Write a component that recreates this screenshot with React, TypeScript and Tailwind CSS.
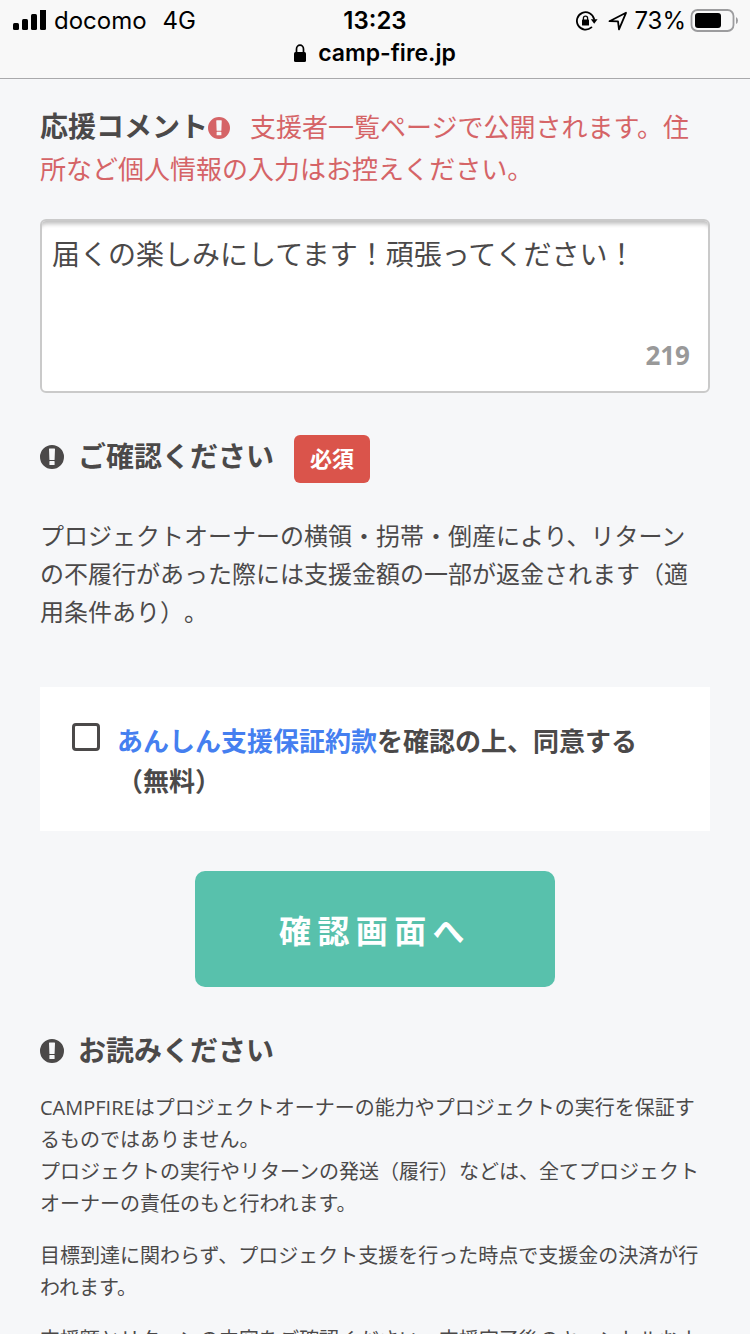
import React, { useState } from "react";

function NoticeIcon({ className }: { className: string }) {
  return (
    <svg viewBox="0 0 24 24" className={className} fill="currentColor" aria-hidden="true">
      <path
        fillRule="evenodd"
        d="M12 0a12 12 0 1 1 0 24a12 12 0 0 1 0-24zM9.6 3.5h4.8q.6 0 .6.6l-.4 10.3q0 .6-.6.6h-4q-.6 0-.6-.6l-.4-10.3q0-.6.6-.6zM9.9 16h4.2q.5 0 .5.5v3q0 .5-.5.5h-4.2q-.5 0-.5-.5v-3q0-.5.5-.5z"
      />
    </svg>
  );
}

function StatusBar() {
  return (
    <header className="shrink-0 border-b border-[#a9a9ab] bg-[#f8f8f8] pt-[5px] pb-[9px] font-['Inter','Liberation_Sans',sans-serif] text-black">
      <div className="grid grid-cols-3 items-center px-3 text-2xl leading-8">
        <div className="flex items-center gap-2">
          <svg viewBox="0 0 34 22" className="h-[22px] w-[34px]" aria-hidden="true">
            <rect x="1" y="13" width="6" height="7" rx="1.5" />
            <rect x="10" y="9" width="6" height="11" rx="1.5" />
            <rect x="19" y="4" width="6" height="16" rx="1.5" />
            <rect x="28" y="-1" width="6" height="21" rx="1.5" />
          </svg>
          <span>docomo</span>
          <span className="ml-2">4G</span>
        </div>
        <div className="text-center font-semibold">13:23</div>
        <div className="flex items-center justify-end">
          <svg viewBox="0 0 22 20" className="h-5 w-[22px]" aria-hidden="true">
            <path d="M15.4 16.4A8.7 8.7 0 1 1 18.1 8" fill="none" stroke="#000" strokeWidth="1.8" strokeLinecap="round" />
            <path d="M14.8 8.2h6.8l-3.4 4.6z" />
            <rect x="6" y="8.6" width="7" height="6" rx=".7" />
            <path d="M7.4 9.2V7.2a2.1 2.1 0 0 1 4.2 0v2" fill="none" stroke="#000" strokeWidth="1.3" />
          </svg>
          <svg viewBox="0 0 20 20" className="ml-2.5 h-5 w-5" aria-hidden="true">
            <path d="M1.5 10.2L18 1.8L11 18.4L10 10.4z" fill="none" stroke="#000" strokeWidth="1.8" strokeLinejoin="round" />
          </svg>
          <span className="ml-1.5">73%</span>
          <svg viewBox="0 0 48 24" className="ml-1 h-6 w-12 shrink-0" aria-hidden="true">
            <rect x="1.5" y="1" width="42" height="21" rx="6" fill="none" stroke="#9c9c9e" strokeWidth="1.8" />
            <rect x="5" y="4" width="26" height="15" rx="3" />
            <path d="M46 8q2 1 2 3.5t-2 3.5z" fill="#9c9c9e" />
          </svg>
        </div>
      </div>
      <div className="flex items-center justify-center gap-3 text-[23px] leading-8 font-semibold">
        <svg viewBox="0 0 12 18" className="h-[18px] w-3" aria-hidden="true">
          <rect x="0" y="8" width="12" height="10" rx="1.5" />
          <path d="M2.5 8.5V5a3.5 3.8 0 0 1 7 0v3.5" fill="none" stroke="#000" strokeWidth="1.7" />
        </svg>
        <span>camp-fire.jp</span>
      </div>
    </header>
  );
}

function SectionHeading({ title, children }: { title: string; children?: React.ReactNode }) {
  return (
    <div className="mt-[42px] flex items-start">
      <NoticeIcon className="mt-2.5 mr-3.5 size-6" />
      <h2 className="text-[28px] leading-[42px] font-bold">{title}</h2>
      {children}
    </div>
  );
}

const MAX_LENGTH = 240;

export default function App() {
  const [comment, setComment] = useState("届くの楽しみにしてます！頑張ってください！");
  const [agreed, setAgreed] = useState(false);

  return (
    <div
      lang="ja"
      className="flex h-screen flex-col bg-[#f6f7f9] font-['Open_Sans','Noto_Sans_CJK_JP',sans-serif] text-[#4b4949] [text-spacing-trim:space-all]"
    >
      <StatusBar />
      <main className="min-h-0 flex-1 overflow-y-auto px-10 pt-[26px] [scrollbar-width:none]">
        <div className="text-[26px] leading-[42px] text-[#d56467]">
          <label htmlFor="comment" className="text-[28px] font-bold text-[#4b4949]">
            応援コメント
          </label>
          <NoticeIcon className="mr-5 inline-block size-[22px] align-[-2px]" />
          <span>支援者一覧ページで公開されます。住所など個人情報の入力はお控えください。</span>
        </div>

        <div className="relative mt-[29px]">
          <textarea
            id="comment"
            value={comment}
            onChange={(e) => setComment(e.target.value)}
            className="block h-[174px] w-full resize-none rounded-md border-2 border-[#cacaca] bg-white px-2.5 py-3 text-[28px] leading-[42px] shadow-[inset_0_7px_4px_-4px_#c0c0c0] outline-none"
          />
          <span className="absolute right-5 bottom-[18px] text-[26px] leading-10 font-bold text-[#999999]">
            {MAX_LENGTH - comment.length}
          </span>
        </div>

        <SectionHeading title="ご確認ください">
          <span className="ml-5 rounded-md bg-[#da544b] px-4 pb-0.5 text-[22px] leading-[46px] font-bold text-white">必須</span>
        </SectionHeading>

        <p className="mt-[34px] pr-5 text-2xl leading-[38px]">
          プロジェクトオーナーの横領・拐帯・倒産により、リターンの不履行があった際には支援金額の一部が返金されます（適用条件あり）。
        </p>

        <div className="mt-14 flex items-start bg-white px-8 pt-[34px] pb-[30px]">
          <input
            id="agree"
            type="checkbox"
            checked={agreed}
            onChange={(e) => setAgreed(e.target.checked)}
            className="mt-0.5 size-7 shrink-0 appearance-none rounded border-3 border-[#4b4949] bg-white checked:bg-[#4b4949]"
          />
          <label htmlFor="agree" className="ml-[17px] text-[26px] leading-10 font-bold">
            <a href="#terms" className="text-[#457ff0]">あんしん支援保証約款</a>を確認の上、同意する
            <br />
            （無料）
          </label>
        </div>

        <button
          type="button"
          className="mx-auto mt-10 block h-[116px] w-[360px] rounded-[10px] bg-[#58c1ac] pt-1 text-[32px] font-bold tracking-[0.2em] text-white"
        >
          確認画面へ
        </button>

        <SectionHeading title="お読みください" />
        <div className="mt-[21px] space-y-5 text-xl leading-8">
          <p>
            CAMPFIREはプロジェクトオーナーの能力やプロジェクトの実行を保証するものではありません。
            <br />
            プロジェクトの実行やリターンの発送（履行）などは、全てプロジェクトオーナーの責任のもと行われます。
          </p>
          <p>目標到達に関わらず、プロジェクト支援を行った時点で支援金の決済が行われます。</p>
          <p>支援額とリターンの内容をご確認ください。支援完了後のキャンセルおよび返金はできません。</p>
        </div>
      </main>
    </div>
  );
}
